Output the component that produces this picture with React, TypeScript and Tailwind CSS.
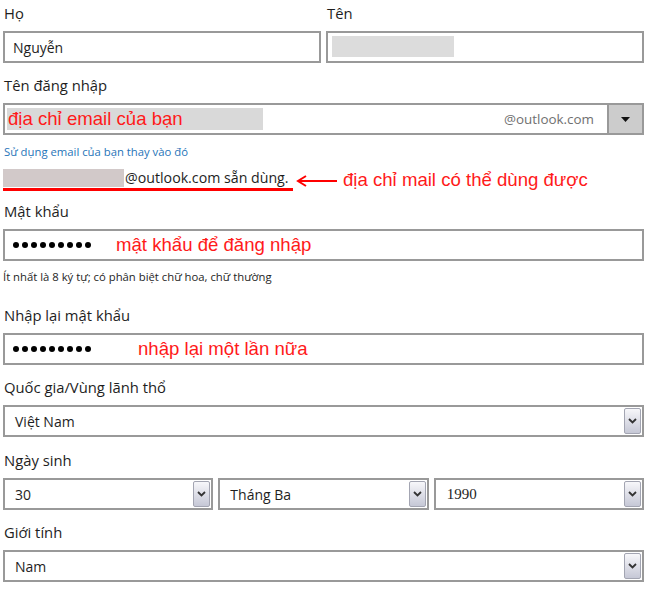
import React from "react";

const FONT = "font-['Segoe_UI','Open_Sans','Noto_Sans',sans-serif]";
const ARIAL = "font-['Liberation_Sans',Arial,sans-serif]";

function Label({ children, mt }: { children: React.ReactNode; mt: string }) {
  return (
    <div className={`${mt} h-[20px] leading-[20px] text-[14.8px] text-[#1e1e1e] pl-[1px] mb-[8px]`}>
      {children}
    </div>
  );
}

function Chevron() {
  return (
    <svg width="9" height="6" viewBox="0 0 9 6">
      <path d="M1 1 L4.5 4.5 L8 1" fill="none" stroke="#333" strokeWidth="1.8" />
    </svg>
  );
}

function SelectBox({ value, className = "", valueClass = "" }: { value: string; className?: string; valueClass?: string }) {
  return (
    <div className={`h-[32px] border-2 border-[#999] bg-white flex items-center ${className}`}>
      <span className={`flex-1 pl-[10px] text-[14px] text-[#1e1e1e] ${valueClass}`}>{value}</span>
      <div className="w-[17px] h-[26px] mr-[1px] rounded-[2px] border border-[#a3a5b2] bg-linear-to-b from-[#f7f7fa] to-[#c6c8d6] flex items-center justify-center">
        <Chevron />
      </div>
    </div>
  );
}

function Dots() {
  return (
    <div className="flex gap-[3px] pl-[8px]">
      {Array.from({ length: 9 }).map((_, i) => (
        <span key={i} className="w-[6px] h-[6px] rounded-full bg-black" />
      ))}
    </div>
  );
}

export default function App() {
  return (
    <div className={`w-[650px] h-[593px] bg-white pl-[3px] pr-[6px] pt-[3px] ${FONT} overflow-hidden`}>
      {/* Họ / Tên */}
      <div className="flex gap-[5px]">
        <div className="flex-1">
          <Label mt="mt-0">Họ</Label>
          <div className="h-[32px] border-2 border-[#999] flex items-center pl-[8px] text-[14px] text-[#1e1e1e]">
            Nguyễn
          </div>
        </div>
        <div className="flex-1">
          <Label mt="mt-0">Tên</Label>
          <div className="h-[32px] border-2 border-[#999] pl-[4px] pt-[3px]">
            <div className="w-[122px] h-[21px] bg-[#dcdcdc]" />
          </div>
        </div>
      </div>

      {/* Username */}
      <Label mt="mt-[12px]">Tên đăng nhập</Label>
      <div className="h-[32px] border-2 border-[#999] flex items-stretch">
        <div className="flex-1 flex items-center pl-[2px]">
          <div className={`w-[256px] h-[22px] bg-[#d9d9d9] ${ARIAL} text-[18.6px] leading-[22px] text-[#ff1a1a] pl-[1px]`}>
            địa chỉ email của bạn
          </div>
          <div className="flex-1" />
          <span className="text-[13.4px] text-[#707070] pr-[13px]">@outlook.com</span>
        </div>
        <div className="w-[35px] bg-[#cccccc] border-l-2 border-[#999] flex items-center justify-center">
          <svg width="9" height="5" viewBox="0 0 9 5">
            <path d="M0 0 H9 L4.5 5 Z" fill="#111" />
          </svg>
        </div>
      </div>

      <div className="mt-[10px] h-[14px] leading-[14px] text-[11.3px] text-[#1f74b8] pl-[1px]">
        Sử dụng email của bạn thay vào đó
      </div>

      {/* availability row */}
      <div className="mt-[10px] flex items-start">
        <div className="w-[290px]">
          <div className="flex items-center h-[18px]">
            <div className="w-[121px] h-[18px] bg-[#d2c9c9]" />
            <span className="text-[14.2px] text-[#1e1e1e] leading-[18px] pl-[1px]">@outlook.com sẵn dùng.</span>
          </div>
          <div className="mt-[1px] h-[3px] bg-[#ff0000]" />
        </div>
        <svg width="45" height="14" viewBox="0 0 45 14" className="ml-[2px] mt-[5px]">
          <path d="M3 7 H42" stroke="#ff0000" strokeWidth="2" />
          <path d="M11 2 L3 7 L11 12" fill="none" stroke="#ff0000" strokeWidth="2" />
        </svg>
        <span className={`${ARIAL} text-[18.6px] leading-[20px] text-[#ff1a1a] ml-[3px] mt-[1px]`}>
          địa chỉ mail có thể dùng được
        </span>
      </div>

      {/* Password */}
      <Label mt="mt-[10px]">Mật khẩu</Label>
      <div className="h-[32px] border-2 border-[#999] flex items-center">
        <Dots />
        <span className={`${ARIAL} text-[18.6px] text-[#ff1a1a] ml-[25px]`}>mật khẩu để đăng nhập</span>
      </div>
      <div className="mt-[9px] h-[14px] leading-[14px] text-[11.3px] text-[#1e1e1e]">
        Ít nhất là 8 ký tự; có phân biệt chữ hoa, chữ thường
      </div>

      <Label mt="mt-[21px]">Nhập lại mật khẩu</Label>
      <div className="h-[32px] border-2 border-[#999] flex items-center">
        <Dots />
        <span className={`${ARIAL} text-[18.6px] text-[#ff1a1a] ml-[47px]`}>nhập lại một lần nữa</span>
      </div>

      <Label mt="mt-[12px]">Quốc gia/Vùng lãnh thổ</Label>
      <SelectBox value="Việt Nam" />

      <Label mt="mt-[13px]">Ngày sinh</Label>
      <div className="flex gap-[5px]">
        <SelectBox value="30" className="flex-1" />
        <SelectBox value="Tháng Ba" className="flex-1" />
        <SelectBox value="1990" className="flex-1" valueClass="font-['Liberation_Serif',serif] text-[15px] pl-[11px]" />
      </div>

      <Label mt="mt-[12px]">Giới tính</Label>
      <SelectBox value="Nam" />
    </div>
  );
}
